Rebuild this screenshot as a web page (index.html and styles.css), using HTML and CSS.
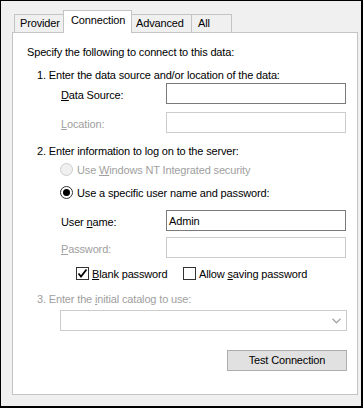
FILE: index.html
```html
<!DOCTYPE html>
<html>
<head>
<meta charset="utf-8">
<link rel="stylesheet" href="styles.css">
</head>
<body>
<div class="window">
  <div class="tabs">
    <div class="tab t-provider">Provider</div>
    <div class="tab tab-active t-connection">Connection</div>
    <div class="tab t-advanced">Advanced</div>
    <div class="tab t-all">All</div>
  </div>
  <div class="panel">
    <div class="line intro">Specify the following to connect to this data:</div>
    <div class="line step step1">1. Enter the data source and/or location of the data:</div>
    <div class="field-row row-ds">
      <span class="label"><u>D</u>ata Source:</span>
      <span class="input"></span>
    </div>
    <div class="field-row row-loc disabled">
      <span class="label"><u>L</u>ocation:</span>
      <span class="input input-disabled"></span>
    </div>
    <div class="line step step2">2. Enter information to log on to the server:</div>
    <div class="option row-r1 disabled">
      <span class="radio radio-disabled"></span>
      <span>Use <u>W</u>indows NT Integrated security</span>
    </div>
    <div class="option row-r2">
      <span class="radio radio-checked"><span class="dot"></span></span>
      <span>Use a specific user name and password:</span>
    </div>
    <div class="field-row row-user">
      <span class="label">User <u>n</u>ame:</span>
      <span class="input"><span class="value">Admin</span></span>
    </div>
    <div class="field-row row-pass disabled">
      <span class="label"><u>P</u>assword:</span>
      <span class="input input-disabled"></span>
    </div>
    <div class="checks">
      <div class="check-item check-first">
        <span class="checkbox">
          <svg width="11" height="11" viewBox="0 0 11 11"><path d="M1.5 5.5 L4 8.5 L9.5 1.5" fill="none" stroke="#000" stroke-width="1.8"/></svg>
        </span>
        <span><u>B</u>lank password</span>
      </div>
      <div class="check-item">
        <span class="checkbox"></span>
        <span>Allow <u>s</u>aving password</span>
      </div>
    </div>
    <div class="line step step3 disabled">3. Enter the <u>i</u>nitial catalog to use:</div>
    <div class="combo">
      <svg class="chev" width="9" height="6" viewBox="0 0 9 6"><path d="M0.5 0.8 L4.5 4.8 L8.5 0.8" fill="none" stroke="#a8a8a8" stroke-width="1.4"/></svg>
    </div>
    <div class="btn-row">
      <div class="button">Test Connection</div>
    </div>
  </div>
</div>
</body>
</html>
```

FILE: styles.css
```css
html, body {
  margin: 0;
  padding: 0;
}
body {
  width: 363px;
  height: 408px;
  overflow: hidden;
  font-family: "Liberation Sans", Arial, sans-serif;
  font-size: 11px;
  letter-spacing: -0.15px;
  color: #000;
}
.window {
  width: 363px;
  height: 408px;
  box-sizing: border-box;
  border: 1px solid #000;
  border-right-width: 2px;
  border-bottom-width: 2px;
  background: #f0f0f0;
  padding: 9px 3px 0 11px;
}
.tabs {
  display: flex;
  align-items: flex-end;
  height: 22px;
  padding-left: 2px;
}
.tab {
  box-sizing: border-box;
  height: 18px;
  border: 1px solid #c4c4c4;
  border-bottom: none;
  background: #f0f0f0;
  line-height: 17px;
  padding: 0 5px;
  position: relative;
  white-space: nowrap;
}
.tab + .tab {
  border-left: none;
}
.t-provider { width: 50px; padding-left: 5px; }
.t-connection { width: 69px; }
.t-advanced { width: 60px; padding-left: 4px; }
.t-all { width: 40px; padding-left: 6px; }
.tab-active {
  height: 23px;
  margin-bottom: -1px;
  background: #fff;
  z-index: 1;
  line-height: 19px;
  padding-left: 7px;
  border-left: 1px solid #c4c4c4 !important;
  margin-left: -1px;
}
.panel {
  box-sizing: border-box;
  height: 363px;
  border: 1px solid #c4c4c4;
  background: #fff;
  padding: 12px 0 0 14px;
  display: flex;
  flex-direction: column;
}
.line {
  height: 15px;
  line-height: 15px;
  white-space: nowrap;
}
.step { margin-left: 10px; }
.step1 { margin-top: 8px; }
.step2 { margin-top: 11px; }
.step3 { margin-top: 10px; }
.disabled { color: #a0a0a0; }
.field-row {
  display: flex;
  align-items: center;
  height: 21px;
  margin-left: 34px;
}
.row-loc { margin-top: 8px; }
.row-user { margin-top: 9px; }
.row-pass { margin-top: 6px; }
.label {
  width: 105px;
  padding-top: 2px;
}
.input {
  box-sizing: border-box;
  width: 180px;
  height: 21px;
  border: 1px solid #7a7a7a;
  background: #fff;
  display: flex;
  align-items: center;
  color: #000;
}
.input-disabled {
  border-color: #cccccc;
}
.value {
  padding-left: 2px;
}
.option {
  display: flex;
  align-items: center;
  height: 17px;
  margin-left: 33px;
}
.row-r1 { margin-top: 2px; }
.row-r2 { margin-top: 6px; }
.radio {
  box-sizing: border-box;
  width: 13px;
  height: 13px;
  border-radius: 50%;
  border: 1px solid #333;
  background: #fff;
  margin-right: 4px;
  display: flex;
  align-items: center;
  justify-content: center;
}
.radio-disabled {
  border-color: #cccccc;
  background: #f0f0f0;
}
.dot {
  width: 7px;
  height: 7px;
  border-radius: 50%;
  background: #000;
}
.checks {
  display: flex;
  align-items: center;
  height: 17px;
  margin-top: 7px;
  margin-left: 49px;
}
.check-item {
  display: flex;
  align-items: center;
}
.check-first {
  width: 107px;
}
.checkbox {
  box-sizing: border-box;
  width: 13px;
  height: 13px;
  border: 1px solid #333;
  background: #fff;
  margin-right: 3px;
  display: flex;
  align-items: center;
  justify-content: center;
}
.combo {
  box-sizing: border-box;
  width: 287px;
  height: 21px;
  margin-top: 3px;
  margin-left: 33px;
  border: 1px solid #cccccc;
  background: #fff;
  display: flex;
  align-items: center;
  justify-content: flex-end;
  padding-right: 5px;
}
.btn-row {
  display: flex;
  justify-content: flex-end;
  margin-top: 19px;
  width: 320px;
}
.button {
  box-sizing: border-box;
  width: 120px;
  height: 21px;
  border: 1px solid #adadad;
  background: #e1e1e1;
  text-align: center;
  line-height: 19px;
}
```
